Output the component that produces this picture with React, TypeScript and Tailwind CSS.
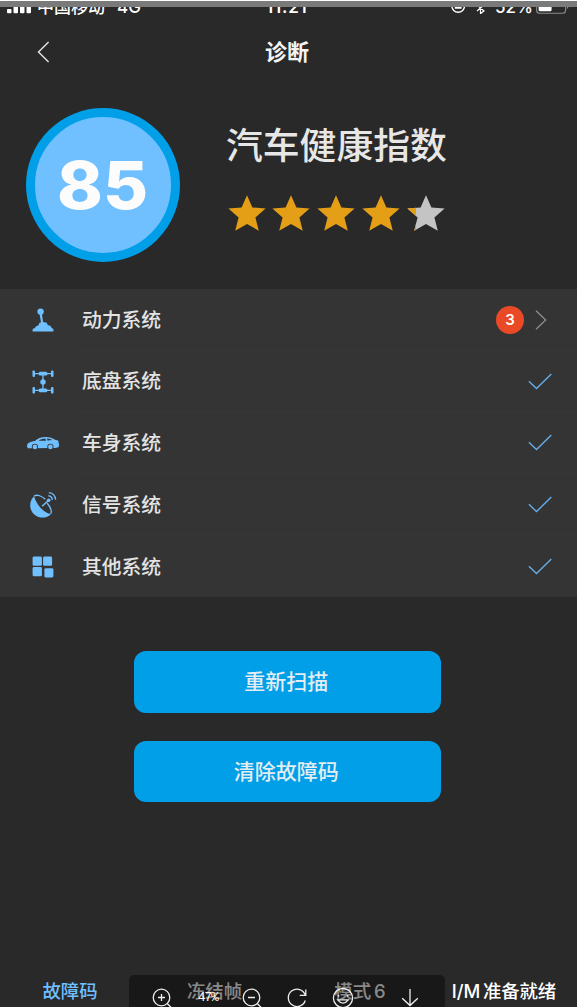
import type { ReactNode } from "react";

const cjk = "font-['Inter','Noto_Sans_CJK_SC',sans-serif]";

function Star({ partial = false }: { partial?: boolean }) {
  const points = "19,0.3 24.4,12.4 37.6,13.6 27.4,22.4 30.8,35.7 19,29 7.2,35.7 10.6,22.4 0.4,13.6 13.6,12.4";
  return (
    <svg width="38" height="36" viewBox="0 0 38 36">
      <polygon points={points} fill={partial ? "#c4c4c4" : "#e49f17"} />
      {partial && (
        <>
          <clipPath id="filled-part">
            <rect width="9" height="36" />
          </clipPath>
          <polygon points={points} fill="#e49f17" clipPath="url(#filled-part)" />
        </>
      )}
    </svg>
  );
}

function GearIcon() {
  return (
    <svg width="22" height="24" viewBox="0 0 22 24" fill="#70bfff">
      <circle cx="8.6" cy="3.6" r="3.2" />
      <path d="M7.4 5h2.4l1.3 9 3.6.7 1 2.4 3 1 .9 2 1.8 1v2.4H.6v-2.4l2.4-1 1-1.8 2.3-.8 1-2.5 1.7-.8z" />
    </svg>
  );
}

function ChassisIcon() {
  return (
    <svg width="22" height="24" viewBox="0 0 22 24" fill="#70bfff">
      <rect x="0.5" y="0.5" width="2.5" height="6.4" rx="0.8" />
      <rect x="19" y="0.5" width="2.5" height="6.4" rx="0.8" />
      <rect x="0.5" y="17.1" width="2.5" height="6.4" rx="0.8" />
      <rect x="19" y="17.1" width="2.5" height="6.4" rx="0.8" />
      <path d="M2 3h18v1.3H2zM2 19.8h18v1.3H2zM10.3 4h1.3v16h-1.3z" />
      <rect x="6.6" y="1.8" width="8.8" height="3.8" rx="1.5" />
      <rect x="6.6" y="18.4" width="8.8" height="3.9" rx="1.5" />
      <circle cx="11" cy="12" r="2.7" />
    </svg>
  );
}

function CarIcon() {
  return (
    <svg width="34" height="14" viewBox="0 0 34 14">
      <path d="M1 10C1.2 7 3.5 5.9 9 5 12.8 2 15.2 1.1 20 1.1c3.6 0 6.5 1 9.5 3l2.7.5.5 2.4.5 2.3-.8 2-3.1.8-27.6.1z" fill="#70bfff" />
      <path d="M12.4 4.7c2.3-1.5 4-2.2 7-2.3l.6 2.3zM21 2.4c2.4.1 3.8.5 5.4 1.7l-4.9.5z" fill="#343434" />
      <circle cx="8.9" cy="10.9" r="3.1" fill="#343434" />
      <circle cx="24.4" cy="10.9" r="3.1" fill="#343434" />
      <circle cx="8.9" cy="10.9" r="2.3" fill="#70bfff" />
      <circle cx="24.4" cy="10.9" r="2.3" fill="#70bfff" />
    </svg>
  );
}

function DishIcon() {
  return (
    <svg width="28" height="28" viewBox="0 0 28 28" fill="none" stroke="#70bfff">
      <path d="M5 5.2C-.2 10.3.2 18.5 4.5 22.7c5 5 13 5.2 17.4.5C16.5 22.5 8.4 16 5 5.2z" fill="#70bfff" stroke="none" />
      <path d="M5 5.2c3.1-2.4 8.2.2 11.2 3M18.1 12c3.3 4.2 5.2 8.6 3.5 10.9" strokeWidth="1.3" />
      <path d="M13.1 15.2 20.4 8.5" strokeWidth="1.5" />
      <circle cx="19.7" cy="9.2" r="1.8" fill="#70bfff" stroke="none" />
      <path d="M19.4 4.8c2.3.2 3.7 1.9 3.9 4.2M19.8 1.6c4.2.4 6.3 2.8 6.8 7" strokeWidth="1.4" />
    </svg>
  );
}

function BlocksIcon() {
  return (
    <svg width="22" height="22" viewBox="0 0 22 22" fill="#70bfff">
      <rect x="0.6" y="0.6" width="9.3" height="9.2" rx="1.4" />
      <rect x="11.1" y="0.6" width="9" height="9.2" rx="1.4" />
      <rect x="0.6" y="11.1" width="9.3" height="9.2" rx="1.4" />
      <rect x="12.4" y="12.2" width="9" height="9.2" rx="1.4" />
    </svg>
  );
}

function SystemRow({ icon, label, count, last }: { icon: ReactNode; label: string; count?: number; last?: boolean }) {
  return (
    <div className="flex h-[61.6px] items-center">
      <div className="flex w-[82px] shrink-0 items-center pl-[25px] pt-px">
        <div className="flex w-[36px] justify-center">{icon}</div>
      </div>
      <div className={`flex h-full flex-1 items-center justify-between ${last ? "" : "border-b border-[#383838]"}`}>
        <span className="pt-[3px] text-[19.8px] font-medium leading-none text-[#e4e4e4]">{label}</span>
        {count !== undefined ? (
          <div className="flex items-center gap-[11px] pr-[30px] pt-px">
            <span className="flex size-7 items-center justify-center rounded-full bg-[#e94a25] text-[15px] font-semibold text-white">{count}</span>
            <svg width="12" height="20" viewBox="0 0 12 20" fill="none" stroke="#919191" strokeWidth="1.2">
              <path d="M1 .7 10.7 10 1 19.3" />
            </svg>
          </div>
        ) : (
          <svg className="mr-[25px] mt-px" width="24" height="17" viewBox="0 0 24 17" fill="none" stroke="#65ade9" strokeWidth="1.4">
            <path d="m.9 8.3 7.6 7.3L23.3.9" />
          </svg>
        )}
      </div>
    </div>
  );
}

function StatusBar() {
  return (
    <div className="relative h-[8px] overflow-hidden text-white">
      <svg className="absolute left-[7px] top-0" width="25" height="7" fill="white">
        <rect y="2" width="4.5" height="4.3" rx="1" />
        <rect x="6.5" y="-1" width="4.5" height="7.3" rx="1" />
        <rect x="13" y="-1" width="4.5" height="7.3" rx="1" />
        <rect x="19.5" y="-1" width="4.5" height="7.3" rx="1" />
      </svg>
      <span className="absolute bottom-[-1px] left-[37px] whitespace-nowrap text-[17px] font-medium leading-none">中国移动</span>
      <span className="absolute bottom-[-1px] left-[117px] text-[17px] font-medium leading-none">4G</span>
      <span className="absolute bottom-[-1px] left-[266px] text-[17px] font-semibold leading-none tracking-[0.8px]">11:21</span>
      <svg className="absolute left-[451px] top-0" width="15" height="7" fill="none" stroke="white" strokeWidth="1.4">
        <circle cx="7.2" cy="-1" r="6.3" />
        <path d="M4.5 -2h5.4v3H4.5z" fill="white" />
      </svg>
      <svg className="absolute left-[476px] top-0" width="10" height="7" fill="none" stroke="white" strokeWidth="1.2">
        <path d="m1 4 7-6M1-2l7 6-3.5 2.6V-5" />
      </svg>
      <span className="absolute bottom-[-1px] left-[495px] text-[17px] font-medium leading-none">52%</span>
      <svg className="absolute left-[536px] top-0" width="34" height="7" fill="none">
        <rect x="0.6" y="-8" width="29" height="14.2" rx="3" stroke="#8c8c8c" strokeWidth="1.1" />
        <rect x="2.6" y="-6" width="13" height="10.3" rx="1.5" fill="white" />
        <path d="M31-3q3 2 0 5" fill="#8c8c8c" />
      </svg>
    </div>
  );
}

export default function App() {
  return (
    <div className={`${cjk} relative flex h-[1007px] w-[577px] flex-col overflow-hidden bg-[#292929]`}>
      <div className="h-[7px] shrink-0 border-t border-white bg-[#7a7a7a]" />
      <StatusBar />
      <header className="grid h-[73px] shrink-0 grid-cols-3 items-center px-9">
        <svg width="15" height="22" viewBox="0 0 15 22" fill="none" stroke="#dedede" strokeWidth="1.5">
          <path d="M12.6 1 2.5 11l10.1 10" />
        </svg>
        <h1 className="pr-[3px] pt-px text-center text-[22px] font-bold leading-none text-[#f4f4f4]">诊断</h1>
      </header>

      <section className="flex h-[201px] shrink-0 pl-[26px] pt-5">
        <div className="flex size-[154px] items-center justify-center rounded-full border-[9.7px] border-[#009fe8] bg-[#70bfff]">
          <svg width="94" height="64" viewBox="0 0 94 64">
            <text x="46.5" y="56" textAnchor="middle" textLength="91" lengthAdjust="spacingAndGlyphs" className="font-['Inter']" fontSize="66" fontWeight="800" fill="#fcfcfc">85</text>
          </svg>
        </div>
        <div className="flex flex-col pl-[46px] pt-[19px]">
          <h2 className="text-[36.8px] font-medium leading-[38px] text-[#e7e7e7]">汽车健康指数</h2>
          <div className="mt-[30px] flex gap-[6.8px] pl-[1.5px]">
            <Star /><Star /><Star /><Star /><Star partial />
          </div>
        </div>
      </section>

      <section className="h-[308px] shrink-0 bg-[#343434]">
        <SystemRow icon={<GearIcon />} label="动力系统" count={3} />
        <SystemRow icon={<ChassisIcon />} label="底盘系统" />
        <SystemRow icon={<CarIcon />} label="车身系统" />
        <SystemRow icon={<DishIcon />} label="信号系统" />
        <SystemRow icon={<BlocksIcon />} label="其他系统" last />
      </section>

      <div className="flex shrink-0 flex-col gap-7 pl-[133.5px] pt-[54px]">
        <button className="h-[61.5px] w-[307.5px] rounded-[12px] bg-[#009fe8] pr-[2px] text-[21px] font-medium leading-none text-[#e4edf1]">重新扫描</button>
        <button className="h-[61.5px] w-[307.5px] rounded-[12px] bg-[#009fe8] pr-[2px] text-[21px] font-medium leading-none text-[#e4edf1]">清除故障码</button>
      </div>

      <nav className="mt-auto grid h-8 shrink-0 grid-cols-[140px_149px_142px_146px] items-center whitespace-nowrap pt-px text-center text-[18.4px] font-medium leading-none text-[#e4e4e4]">
        <span className="text-[#70bfff]">故障码</span>
        <span>冻结帧</span>
        <span className="[word-spacing:-2px]">模式 6</span>
        <span className="tracking-[-0.1px] text-white [word-spacing:-2px]">I/M 准备就绪</span>
      </nav>

      <div className="absolute bottom-0 left-[129px] h-8 w-[316px] overflow-hidden rounded-t-[5px] bg-black/40">
        <svg width="316" height="32" fill="none" stroke="#eeeeee" strokeWidth="1.3">
          <circle cx="32.5" cy="22.5" r="8.3" />
          <path d="M29 22.5h7M32.5 19v7M38.2 28.5l4 4" />
          <circle cx="122.5" cy="22.5" r="8.3" />
          <path d="M119 22.5h7M128.2 28.5l4 4" />
          <path d="M176.3 20.1a8.7 8.7 0 1 0 0 5.4M176.8 14.4v6h-6" />
          <circle cx="214" cy="23" r="9.6" />
          <path d="M209.5 20v1.4M218.5 20v1.4M208.7 24.8q5.3 6.7 10.6 0z" />
          <path d="M281 14v16M273.2 23.2l7.8 7.3 7.8-7.3" />
        </svg>
        <span className="absolute left-[69px] top-[17px] font-['Liberation_Mono'] text-[12.5px] leading-none tracking-[-0.9px] text-white">47%</span>
      </div>
    </div>
  );
}
